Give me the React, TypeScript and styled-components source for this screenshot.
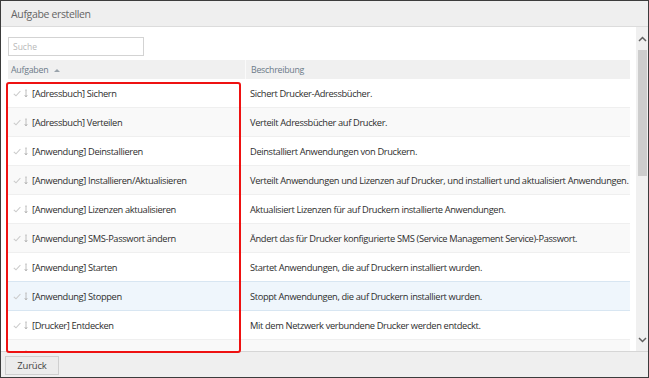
import React from "react";
import styled, { createGlobalStyle } from "styled-components";

const Global = createGlobalStyle`
  html, body { margin: 0; padding: 0; background: #ffffff; }
  body { font-family: "Open Sans", "Noto Sans", sans-serif; }
  * { box-sizing: border-box; }
`;

const Window = styled.div`
  position: relative;
  width: 649px;
  height: 378px;
  border: 1px solid #3c3c3c;
  display: flex;
  flex-direction: column;
  background: #ffffff;
  overflow: hidden;
`;

const TitleBar = styled.div`
  height: 26px;
  flex: none;
  background: #efefef;
  border-bottom: 1px solid #dcdcdc;
  display: flex;
  align-items: center;
  padding-left: 10px;
  font-size: 10.5px;
  color: #666666;
  letter-spacing: -0.35px;
`;

const Body = styled.div`
  flex: 1;
  display: flex;
  min-height: 0;
`;

const Content = styled.div`
  flex: 1;
  padding: 10px 6px 0 7px;
  overflow: hidden;
`;

const Search = styled.input`
  display: block;
  width: 136px;
  height: 19px;
  border: 1px solid #d3d3d3;
  padding: 0 4px;
  font-family: inherit;
  font-size: 8.5px;
  color: #555;
  outline: none;
  margin: 0 0 4px 0;
  &::placeholder { color: #b8b8b8; }
`;

const Table = styled.div`
  display: flex;
  flex-direction: column;
`;

const HeaderRow = styled.div`
  display: grid;
  grid-template-columns: 237px 1fr;
  height: 19px;
  flex: none;
  background: #f0f0f0;
  font-size: 8.8px;
  letter-spacing: -0.25px;
  color: #6b7a88;
`;

const HeaderCell = styled.div<{ $divider?: boolean }>`
  display: flex;
  align-items: center;
  padding-left: ${(p) => (p.$divider ? "5px" : "3px")};
  border-left: ${(p) => (p.$divider ? "1px solid #fafafa" : "none")};
  gap: 6px;
`;

const SortIcon = styled.span`
  width: 0;
  height: 0;
  border-left: 3px solid transparent;
  border-right: 3px solid transparent;
  border-bottom: 3px solid #9aa3ab;
  margin-top: 1px;
`;

const Row = styled.div<{ $alt?: boolean; $hover?: boolean }>`
  display: grid;
  grid-template-columns: 237px 1fr;
  height: 29px;
  flex: none;
  font-size: 9.3px;
  color: #2e2e2e;
  letter-spacing: -0.36px;
  background: ${(p) => (p.$hover ? "#eff6fc" : p.$alt ? "#f9f9f9" : "#ffffff")};
  border-bottom: 1px solid ${(p) => (p.$hover ? "#d8e6f2" : "#efefef")};
  box-shadow: ${(p) => (p.$hover ? "0 -1px 0 #d8e6f2" : "none")};
`;

const Cell = styled.div<{ $pad: number }>`
  display: flex;
  align-items: center;
  padding-left: ${(p) => p.$pad}px;
  padding-top: 1px;
  white-space: nowrap;
  overflow: hidden;
`;

const Icons = styled.span`
  display: inline-flex;
  align-items: center;
  gap: 3px;
  margin-right: 4px;
`;

const Scrollbar = styled.div`
  width: 12px;
  flex: none;
  background: #f0f0f0;
  display: flex;
  flex-direction: column;
  align-items: center;
`;

const ArrowBtn = styled.div`
  height: 23px;
  width: 12px;
  display: flex;
  align-items: center;
  justify-content: center;
  flex: none;
`;

const Thumb = styled.div`
  width: 9px;
  height: 126px;
  background: #cdcdcd;
  flex: none;
`;

const Spacer = styled.div`
  flex: 1;
`;

const Footer = styled.div`
  height: 26px;
  flex: none;
  background: #efefef;
  border-top: 1px solid #d6d6d6;
  display: flex;
  align-items: center;
  padding-left: 4px;
`;

const Button = styled.button`
  width: 54px;
  height: 19px;
  border: 1px solid #cfcfcf;
  background: #ececec;
  font-family: inherit;
  font-size: 9.5px;
  letter-spacing: -0.2px;
  color: #444;
  padding: 0;
  margin-top: 1px;
`;

const Highlight = styled.div`
  position: absolute;
  left: 5px;
  top: 81px;
  width: 235px;
  height: 271px;
  border: 2px solid #ee1111;
  border-radius: 3px;
  pointer-events: none;
`;

const Check = () => (
  <svg width="8" height="7" viewBox="0 0 8 7">
    <path d="M0.8 3.8 L3 5.8 L7.4 1" fill="none" stroke="#cacaca" strokeWidth="1.1" />
  </svg>
);

const Down = () => (
  <svg width="4" height="9" viewBox="0 0 4 9">
    <path d="M2 0.5 V8" fill="none" stroke="#b0b0b0" strokeWidth="0.8" />
    <path d="M0.7 6 L2 8 L3.3 6" fill="none" stroke="#b0b0b0" strokeWidth="0.8" />
    <path d="M1 1.3 H3" fill="none" stroke="#c8c8c8" strokeWidth="0.7" />
  </svg>
);

const Chevron = ({ up }: { up?: boolean }) => (
  <svg width="9" height="6" viewBox="0 0 9 6">
    <path
      d={up ? "M1 5 L4.5 1.5 L8 5" : "M1 1 L4.5 4.5 L8 1"}
      fill="none"
      stroke="#606060"
      strokeWidth="1.5"
    />
  </svg>
);

const rows: [string, string][] = [
  ["[Adressbuch] Sichern", "Sichert Drucker-Adressbücher."],
  ["[Adressbuch] Verteilen", "Verteilt Adressbücher auf Drucker."],
  ["[Anwendung] Deinstallieren", "Deinstalliert Anwendungen von Druckern."],
  [
    "[Anwendung] Installieren/Aktualisieren",
    "Verteilt Anwendungen und Lizenzen auf Drucker, und installiert und aktualisiert Anwendungen.",
  ],
  ["[Anwendung] Lizenzen aktualisieren", "Aktualisiert Lizenzen für auf Druckern installierte Anwendungen."],
  ["[Anwendung] SMS-Passwort ändern", "Ändert das für Drucker konfigurierte SMS (Service Management Service)-Passwort."],
  ["[Anwendung] Starten", "Startet Anwendungen, die auf Druckern installiert wurden."],
  ["[Anwendung] Stoppen", "Stoppt Anwendungen, die auf Druckern installiert wurden."],
  ["[Drucker] Entdecken", "Mit dem Netzwerk verbundene Drucker werden entdeckt."],
  ["[Drucker] Neu starten", "Ein Drucker wird neu gestartet und danach erneut gefunden."],
];

export default function App() {
  return (
    <>
      <Global />
      <Window>
        <TitleBar>Aufgabe erstellen</TitleBar>
        <Body>
          <Content>
            <Search placeholder="Suche" />
            <Table>
              <HeaderRow>
                <HeaderCell>
                  Aufgaben <SortIcon />
                </HeaderCell>
                <HeaderCell $divider>Beschreibung</HeaderCell>
              </HeaderRow>
              {rows.map(([task, desc], i) => (
                <Row key={task} $alt={i % 2 === 1} $hover={i === 7}>
                  <Cell $pad={5}>
                    <Icons>
                      <Check />
                      <Down />
                    </Icons>
                    {task}
                  </Cell>
                  <Cell $pad={5}>{desc}</Cell>
                </Row>
              ))}
            </Table>
          </Content>
          <Scrollbar>
            <ArrowBtn>
              <Chevron up />
            </ArrowBtn>
            <Thumb />
            <Spacer />
            <ArrowBtn>
              <Chevron />
            </ArrowBtn>
          </Scrollbar>
        </Body>
        <Footer>
          <Button>Zurück</Button>
        </Footer>
        <Highlight />
      </Window>
    </>
  );
}
